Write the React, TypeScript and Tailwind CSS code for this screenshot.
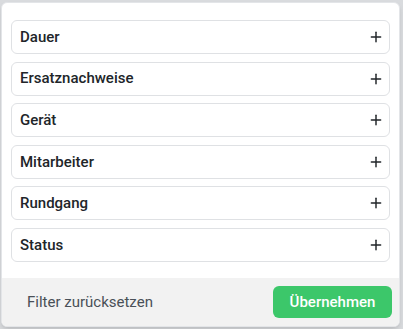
import React from 'react';
import { Plus } from 'lucide-react';

const filters = ['Dauer', 'Ersatznachweise', 'Gerät', 'Mitarbeiter', 'Rundgang', 'Status'];

const App: React.FC = () => {
  return (
    <div className="w-[403px] h-[329px] bg-[#d9dbde] py-[2px] pl-[1px] font-['Roboto',sans-serif]">
      <div className="h-full w-[399px] bg-white rounded-md border border-[#e3e5e8] shadow-md flex flex-col overflow-hidden">
        <div className="flex-1 flex flex-col gap-[7.6px] px-[9px] pt-[17px]">
          {filters.map(f => (
            <div
              key={f}
              className="h-[34px] rounded-md border border-[#dfe1e4] flex items-center justify-between pl-[8px] pr-[5px]"
            >
              <span className="text-[15px] font-medium text-[#212529]">{f}</span>
              <Plus className="w-[16px] h-[16px] text-[#212529]" strokeWidth={2.2} />
            </div>
          ))}
        </div>
        <div className="h-[48px] bg-[#f2f2f2] flex items-center justify-between pl-[25px] pr-[7px]">
          <span className="text-[15px] text-[#495057]">Filter zurücksetzen</span>
          <button className="h-[32px] w-[119px] rounded-md bg-[#3cc76a] text-white text-[15px] font-medium">
            Übernehmen
          </button>
        </div>
      </div>
    </div>
  );
};

export default App;
